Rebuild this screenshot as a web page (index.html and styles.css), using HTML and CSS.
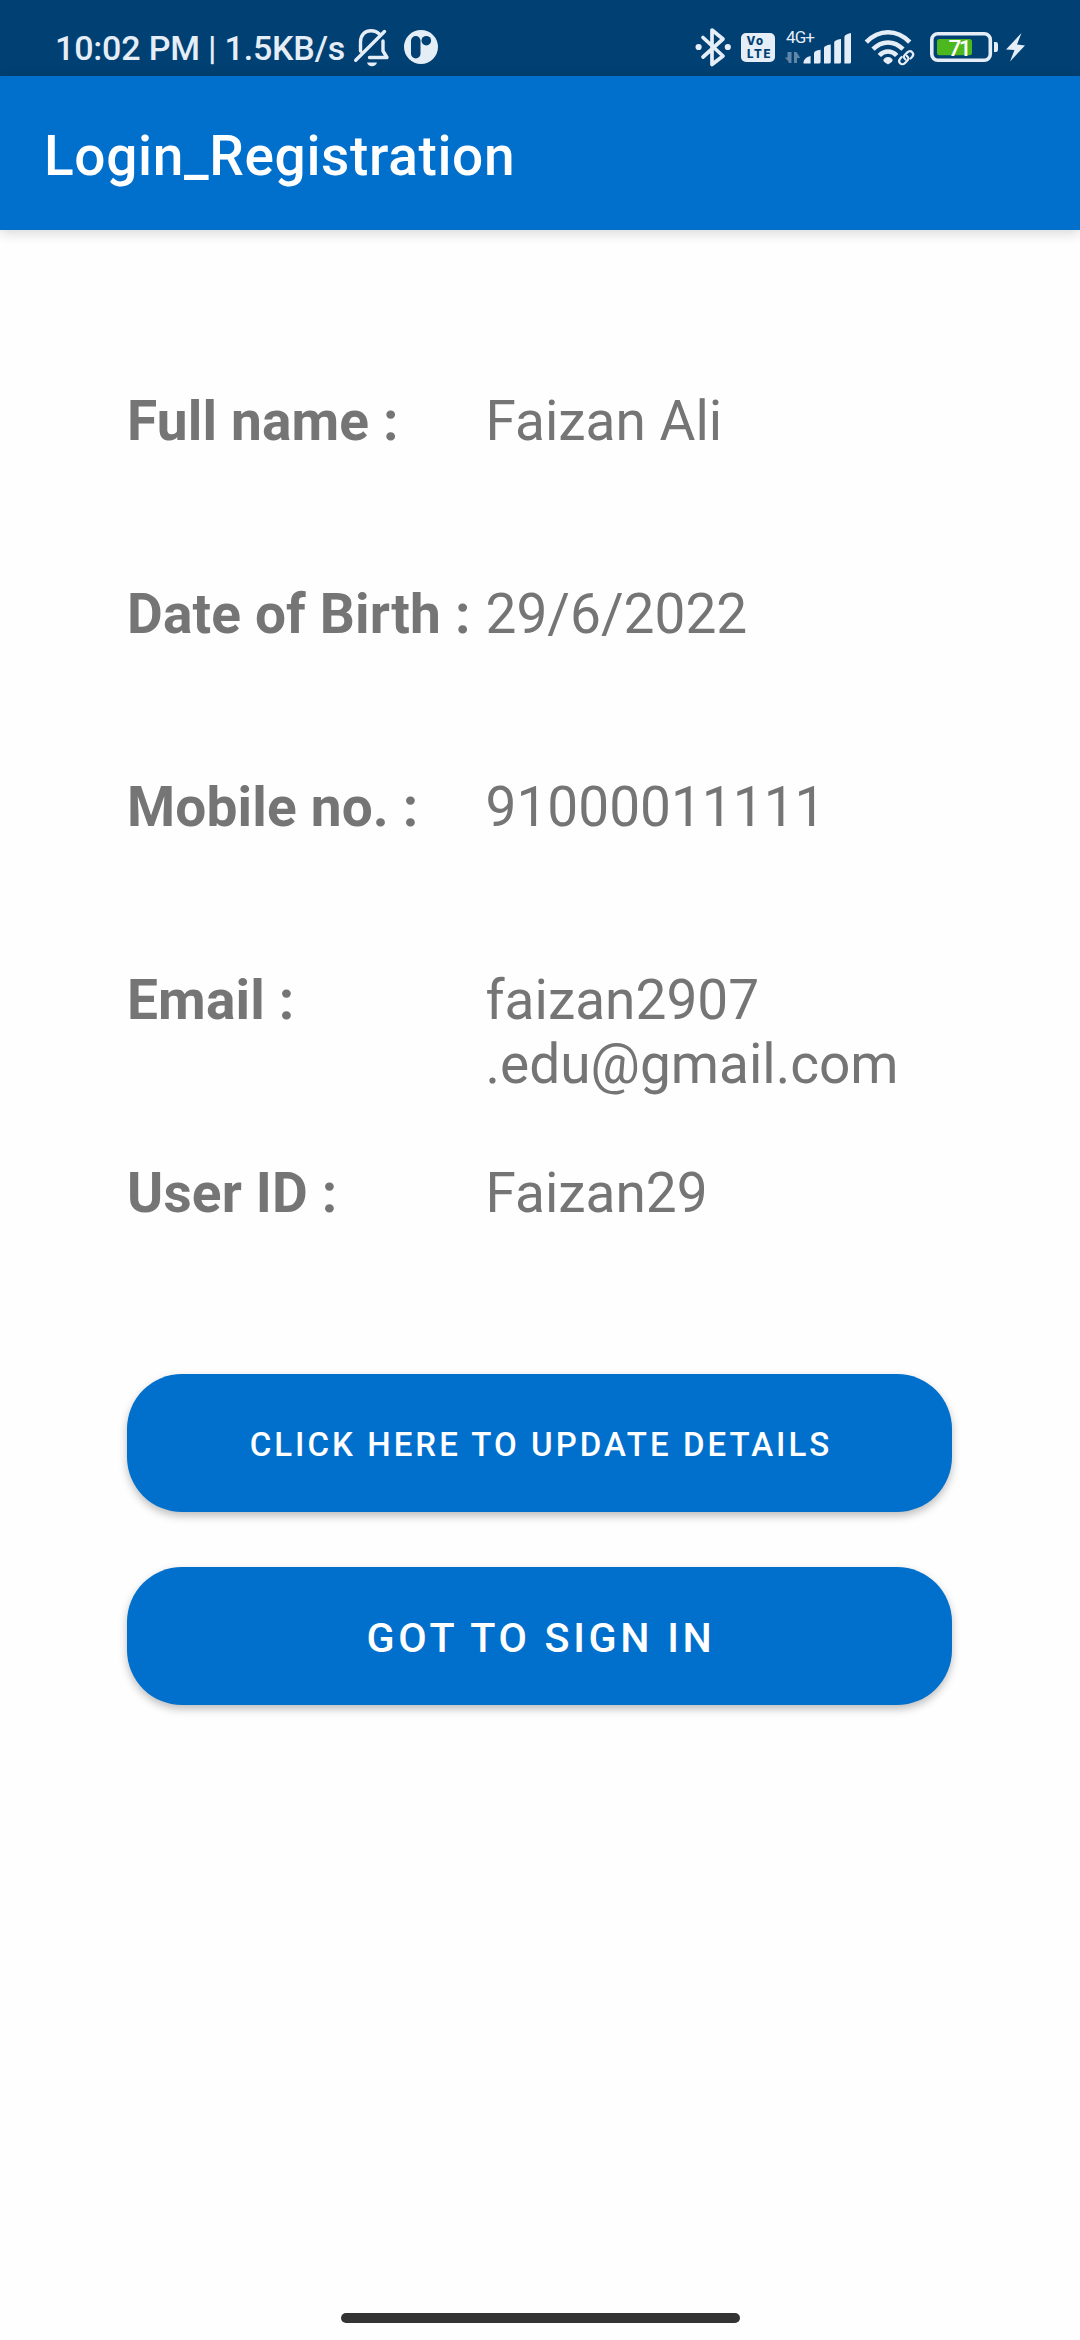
FILE: index.html
```html
<!DOCTYPE html>
<html lang="en">
<head>
<meta charset="utf-8">
<title>Login_Registration</title>
<link rel="stylesheet" href="styles.css">
</head>
<body>
<div class="screen">
  <header class="status-bar">
    <div class="status-left">
      <span class="clock">10:02 PM | 1.5KB/s</span>
      <svg class="icon" width="36" height="40" viewBox="353 27 36 40" fill="none" stroke="currentColor" stroke-width="3.4" stroke-linecap="round" stroke-linejoin="round">
        <path d="M360.500 46V42C360.500 34.500 365.500 30.700 371 30.700C374.500 30.700 377.500 32 379.500 34.200M383 41V51L387 57.500H369.500"/>
        <path d="M384.500 31.500L355.700 60.200M360.500 46V51"/>
        <path d="M367 62.500H377C376.200 65 374.500 66.300 372 66.300S367.800 65 367 62.500Z" fill="currentColor" stroke="none"/>
      </svg>
      <svg class="icon app-icon" width="34" height="34" viewBox="404 30 34 34">
        <circle cx="421" cy="47" r="17" fill="currentColor"/>
        <rect class="cutout" x="411" y="36" width="9.500" height="22.500" rx="4.750"/>
        <circle class="cutout" cx="426.300" cy="40.700" r="4.800"/>
      </svg>
    </div>
    <div class="status-right">
      <svg class="icon" width="36" height="40" viewBox="695 27 36 40">
        <path d="M703 37.500L723 56L712 64.500V30L723 39L703 57" fill="none" stroke="currentColor" stroke-width="3.700" stroke-linecap="round" stroke-linejoin="round"/>
        <circle cx="698.600" cy="47" r="3.100" fill="currentColor"/>
        <circle cx="727.800" cy="47" r="3.100" fill="currentColor"/>
      </svg>
      <svg class="icon volte" width="34" height="29" viewBox="741 33 34 29">
        <rect x="741" y="33" width="34" height="29" rx="5" fill="currentColor"/>
        <text class="volte-text" x="746.500" y="45.300" textLength="16.500">Vo</text>
        <text class="volte-text" x="747" y="58.300" textLength="23.500">LTE</text>
      </svg>
      <svg class="icon signal" width="66" height="36" viewBox="785 28 66 36">
        <text class="network-text" x="786" y="42" textLength="29">4G+</text>
        <path class="traffic" d="M790 51V62L784.800 56.500H787.500V51ZM791.500 51V62H788.500V51ZM794 62V51H796.500L800.200 57H797V62Z"/>
        <path d="M803.500 62.500C803.500 58.500 806 56 810.600 55V62.500ZM814 62.500V52.500Q814 49.500 820.600 48.800V61Q820.600 62.500 819 62.500ZM824 62.500V47Q824 44.500 830.800 43.500V61Q830.800 62.500 829 62.500ZM834.200 62.500V41.500Q834.200 39 841 38V61Q841 62.500 839.500 62.500ZM844.400 62.500V36Q844.400 33.500 851 32V61Q851 62.500 849.500 62.500Z" fill="currentColor"/>
      </svg>
      <svg class="icon wifi" width="50" height="37" viewBox="865 29 50 37">
        <g fill="none" stroke="currentColor" stroke-width="4.600">
          <path d="M866.300 42.200C879 29 897 29 909.700 42.200"/>
          <path d="M873 49.200C882 40.300 894 40.300 903 49.200"/>
          <path d="M879.300 55.500C884.500 50.200 891.500 50.200 896.700 55.500"/>
        </g>
        <path d="M888 64L884.200 61.500C881.800 56.300 894.200 56.300 891.800 61.500Z" fill="currentColor" stroke="currentColor" stroke-linejoin="round"/>
        <g fill="none" stroke="currentColor" stroke-width="2.200" stroke-linecap="round">
          <path d="M905.500 59.500C903.200 57.500 903.400 56.300 905 54.700L907.300 52.400C909 50.700 911 50.900 912.200 52.200C913.500 53.500 913.500 55.400 912 57L910.500 58.500"/>
          <path d="M906.700 55.800C909 57.800 908.800 59.200 907.200 60.800L905 63C903.300 64.700 901.300 64.500 900.100 63.200C898.800 61.900 898.800 60 900.300 58.400L901.700 57"/>
        </g>
      </svg>
      <svg class="icon battery" width="69" height="30" viewBox="930 32 69 30">
        <rect x="931.800" y="33.800" width="58.500" height="26.400" rx="6" fill="none" stroke="currentColor" stroke-width="3.600"/>
        <path d="M994 42H996Q998 42 998 45V49Q998 52 996 52H994Z" fill="currentColor"/>
        <rect class="charge" x="937" y="39" width="35" height="16.300" rx="2.500"/>
        <text class="battery-text" x="948.500" y="56" textLength="23">71</text>
      </svg>
      <svg class="icon" width="20" height="30" viewBox="1006 32 20 30">
        <path d="M1021.500 33L1006 49.500L1014.500 50L1010 61.500L1025 45.500L1017 44.500Z" fill="currentColor"/>
      </svg>
    </div>
  </header>
  <div class="app-bar"><h1 class="app-title">Login_Registration</h1></div>
  <main class="content">
    <dl class="details">
      <dt>Full name :</dt><dd>Faizan Ali</dd>
      <dt>Date of Birth :</dt><dd>29/6/2022</dd>
      <dt>Mobile no. :</dt><dd>91000011111</dd>
      <dt>Email :</dt><dd>faizan2907<br>.edu@gmail.com</dd>
      <dt>User ID :</dt><dd>Faizan29</dd>
    </dl>
    <div class="actions">
      <button class="btn btn-update" type="button">CLICK HERE TO UPDATE DETAILS</button>
      <button class="btn btn-signin" type="button">GOT TO SIGN IN</button>
    </div>
  </main>
  <footer class="nav-bar"><div class="nav-handle"></div></footer>
</div>
</body>
</html>
```
FILE: styles.css
```css
* {
  box-sizing: border-box;
}

body {
  margin: 0;
  background: #fefefe;
  font-family: Roboto, sans-serif;
}

.screen {
  display: flex;
  flex-direction: column;
  width: 1080px;
  height: 2340px;
  overflow: hidden;
}

.status-bar {
  display: flex;
  justify-content: space-between;
  height: 76px;
  padding: 18px 54px 0 55px;
  background: #004072;
  color: #e5edf7;
}

.status-left,
.status-right {
  display: flex;
  align-items: center;
  height: 58px;
}

.clock {
  width: 298px;
  padding-top: 1px;
  font-size: 34px;
  line-height: 40px;
  font-weight: 500;
  letter-spacing: -0.18px;
  white-space: nowrap;
}

.icon {
  flex: none;
  display: block;
  overflow: visible;
}

.app-icon {
  margin-left: 15px;
}

.cutout {
  fill: #004072;
}

.volte {
  margin-left: 10px;
}

.volte-text {
  fill: #004072;
  font: 800 11.500px Inter, sans-serif;
}

.signal {
  margin-left: 10px;
}

.network-text {
  fill: currentColor;
  font-size: 17px;
}

.traffic {
  fill: #6286a8;
}

.wifi {
  margin-left: 14px;
}

.battery {
  margin-left: 15px;
}

.charge {
  fill: #4cb81e;
}

.battery-text {
  fill: #ffffff;
  font-size: 22.500px;
  font-weight: 500;
}

.status-right .icon:last-child {
  margin-left: 7px;
}

.app-bar {
  display: flex;
  align-items: center;
  height: 154px;
  padding: 6px 44px 0;
  background: #0070cc;
  box-shadow: 0 3px 12px rgba(0, 0, 0, 0.16);
}

.app-title {
  margin: 0;
  color: #ffffff;
  font-size: 55px;
  line-height: 64px;
  font-weight: 500;
  letter-spacing: 0.65px;
}

.content {
  flex: 1;
  padding: 159px 128px 0 127px;
}

.details {
  display: grid;
  grid-template-columns: 358.500px 1fr;
  grid-auto-rows: 193px;
  margin: 0 0 20px;
  color: #757575;
  font-size: 55px;
  line-height: 64px;
  white-space: nowrap;
}

.details dt {
  font-weight: 700;
  letter-spacing: 0.15px;
}

.details dd {
  margin: 0;
}

.actions {
  display: flex;
  flex-direction: column;
  gap: 55px;
}

.btn {
  height: 138px;
  padding: 3px 0 0 3px;
  border: 0;
  border-radius: 55px;
  background: #0070cc;
  box-shadow: 0 4px 8px rgba(0, 0, 0, 0.26);
  color: #ffffff;
  font-family: inherit;
  font-weight: 500;
  letter-spacing: 0.0893em;
}

.btn-update {
  font-size: 33px;
  letter-spacing: 0.092em;
}

.btn-signin {
  font-size: 41.250px;
}

.nav-bar {
  display: flex;
  justify-content: center;
  height: 27px;
}

.nav-handle {
  width: 399px;
  height: 10px;
  border-radius: 5px;
  background: #333333;
}
```
